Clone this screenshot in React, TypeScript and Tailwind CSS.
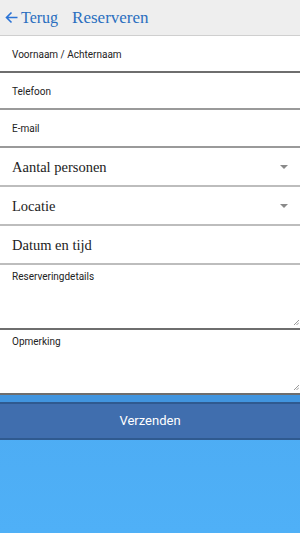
import React from "react";

const serif = { fontFamily: '"Liberation Serif", "DejaVu Serif", serif' };
const sans = { fontFamily: 'Roboto, "Liberation Sans", sans-serif' };

function SmallRow({ label, h }: { label: string; h: string }) {
  return (
    <div className={`${h} flex items-center bg-white px-3 pt-[2px]`}>
      <span className="text-[10px] leading-none text-[#222]" style={sans}>{label}</span>
    </div>
  );
}

function BigRow({ label, select }: { label: string; select?: boolean }) {
  return (
    <div className="flex h-[39px] items-center justify-between border-b-2 border-[#bdbdbd] bg-white pl-3 pr-[12px] pt-[1px]">
      <span className="text-[14.5px] leading-none text-[#222]" style={serif}>{label}</span>
      {select && (
        <span className="h-0 w-0 border-x-[4px] border-t-[4px] border-x-transparent border-t-[#8a8a8a]" />
      )}
    </div>
  );
}

function AreaRow({ label }: { label: string }) {
  return (
    <div className="relative h-[65px] border-b-2 border-[#6e6e6e] bg-white px-3 pt-[7px]">
      <div className="text-[10px] leading-none text-[#222]" style={sans}>{label}</div>
      <svg className="absolute bottom-[3px] right-[1px]" width="5" height="5" viewBox="0 0 5 5">
        <path d="M5 0 L0 5 M5 2.5 L2.5 5" stroke="#9a9a9a" strokeWidth="1" />
      </svg>
    </div>
  );
}

export default function App() {
  return (
    <div className="flex h-[533px] w-[300px] flex-col overflow-hidden bg-gradient-to-b from-[#469fe8] to-[#4fb0f7]">
      <div className="flex h-[36px] items-center gap-[14px] border-b border-[#cfcfcf] bg-[#eeeeee] pl-[5px]">
        <div className="flex items-center gap-[3px] text-[#2a6ebf]">
          <svg width="13" height="13" viewBox="0 0 13 13" fill="none">
            <path d="M12.5 6.5 H1.5 M6.5 1.5 L1.5 6.5 L6.5 11.5" stroke="#2a73d6" strokeWidth="1.6" />
          </svg>
          <span className="text-[16px]" style={serif}>Terug</span>
        </div>
        <span className="text-[17px] text-[#2a6ebf]" style={serif}>Reserveren</span>
      </div>
      <div className="flex flex-col bg-white">
        <SmallRow label="Voornaam / Achternaam" h="h-[37px] border-b-2 border-[#6e6e6e]" />
        <SmallRow label="Telefoon" h="h-[37px] border-b-2 border-[#9a9a9a]" />
        <SmallRow label="E-mail" h="h-[38px] border-b-2 border-[#9a9a9a]" />
        <BigRow label="Aantal personen" select />
        <BigRow label="Locatie" select />
        <BigRow label="Datum en tijd" />
        <AreaRow label="Reserveringdetails" />
        <AreaRow label="Opmerking" />
      </div>
      <div className="h-[7px] bg-[#4195df]" />
      <div className="flex h-[38px] items-center justify-center border-y-2 border-[#2f5a90] bg-[#406eae]">
        <span className="text-[13px] text-white" style={sans}>Verzenden</span>
      </div>
    </div>
  );
}
